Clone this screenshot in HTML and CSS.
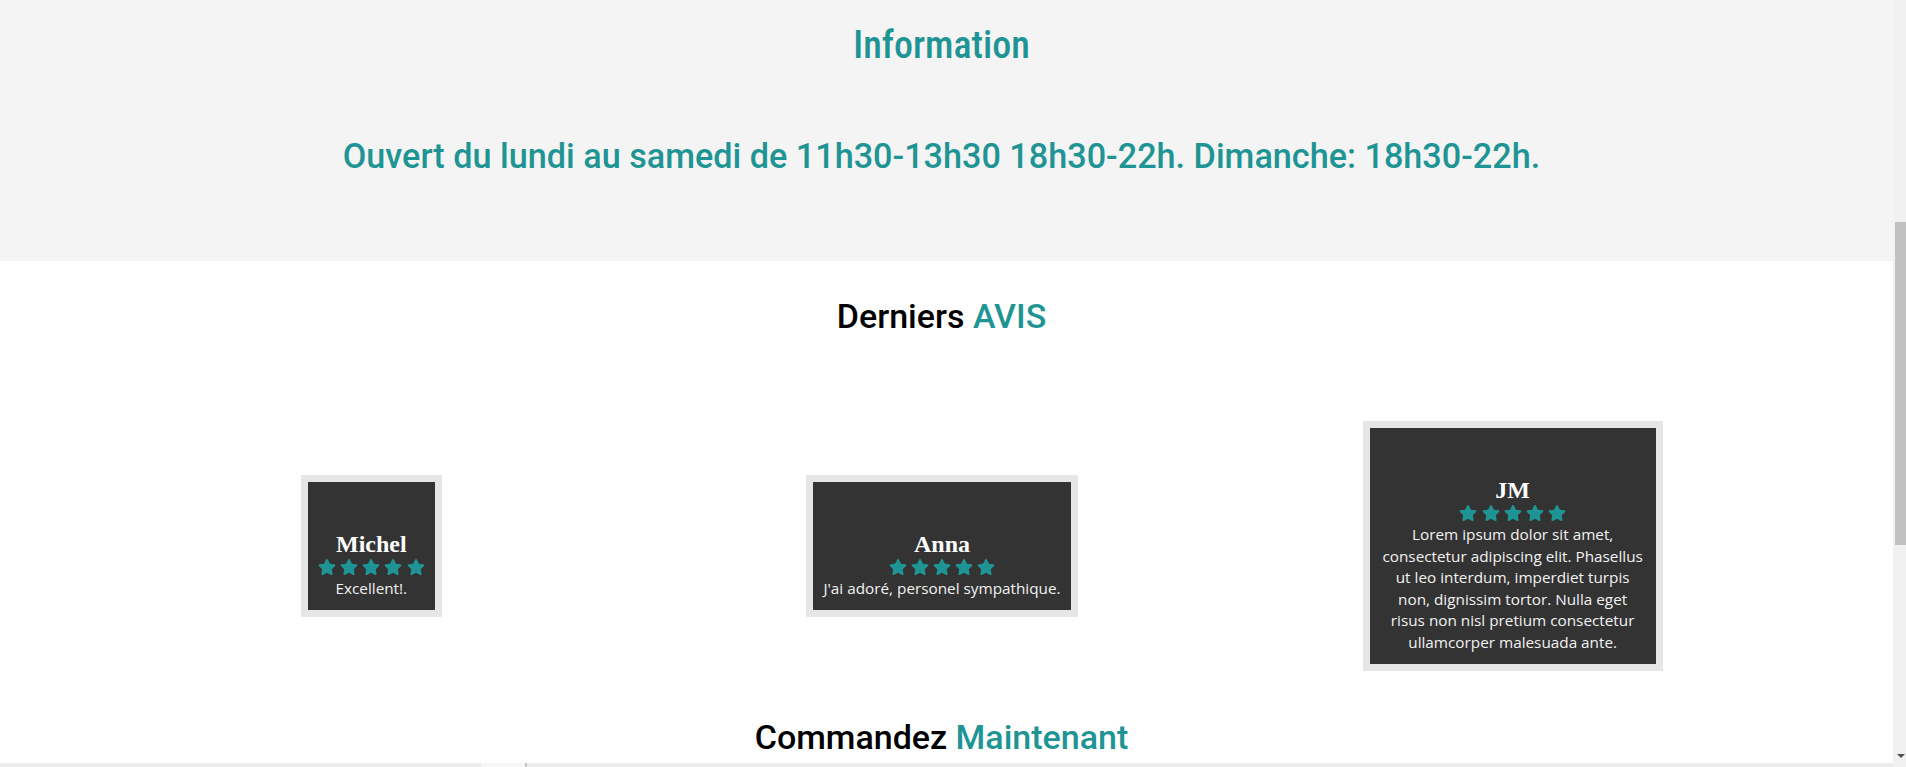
FILE: index.html
```html
<!DOCTYPE html>
<html lang="fr">
<head>
<meta charset="utf-8">
<title>Restaurant</title>
<link rel="stylesheet" href="styles.css">
</head>
<body>
<header class="hero" aria-hidden="true"></header>

<section class="info">
  <h2 class="info-title">Information</h2>
  <p class="info-hours">Ouvert du lundi au samedi de 11h30-13h30 18h30-22h. Dimanche: 18h30-22h.</p>
</section>

<section class="reviews">
  <h2 class="section-title">Derniers <span class="accent">AVIS</span></h2>
  <div class="review-row">
    <div class="review-cell">
      <article class="review-card">
        <h2 class="review-name">Michel</h2>
        <div class="stars"><svg class="star" viewBox="0 0 576 512"><path d="M259.3 17.8L194 150.2 47.9 171.5c-26.2 3.8-36.7 36.1-17.7 54.6l105.7 103-25 145.5c-4.5 26.3 23.2 46 46.4 33.7L288 439.6l130.7 68.7c23.2 12.2 50.9-7.4 46.4-33.7l-25-145.5 105.7-103c19-18.5 8.5-50.8-17.7-54.6L382 150.2 316.7 17.8c-11.7-23.6-45.6-23.9-57.4 0z"/></svg> <svg class="star" viewBox="0 0 576 512"><path d="M259.3 17.8L194 150.2 47.9 171.5c-26.2 3.8-36.7 36.1-17.7 54.6l105.7 103-25 145.5c-4.5 26.3 23.2 46 46.4 33.7L288 439.6l130.7 68.7c23.2 12.2 50.9-7.4 46.4-33.7l-25-145.5 105.7-103c19-18.5 8.5-50.8-17.7-54.6L382 150.2 316.7 17.8c-11.7-23.6-45.6-23.9-57.4 0z"/></svg> <svg class="star" viewBox="0 0 576 512"><path d="M259.3 17.8L194 150.2 47.9 171.5c-26.2 3.8-36.7 36.1-17.7 54.6l105.7 103-25 145.5c-4.5 26.3 23.2 46 46.4 33.7L288 439.6l130.7 68.7c23.2 12.2 50.9-7.4 46.4-33.7l-25-145.5 105.7-103c19-18.5 8.5-50.8-17.7-54.6L382 150.2 316.7 17.8c-11.7-23.6-45.6-23.9-57.4 0z"/></svg> <svg class="star" viewBox="0 0 576 512"><path d="M259.3 17.8L194 150.2 47.9 171.5c-26.2 3.8-36.7 36.1-17.7 54.6l105.7 103-25 145.5c-4.5 26.3 23.2 46 46.4 33.7L288 439.6l130.7 68.7c23.2 12.2 50.9-7.4 46.4-33.7l-25-145.5 105.7-103c19-18.5 8.5-50.8-17.7-54.6L382 150.2 316.7 17.8c-11.7-23.6-45.6-23.9-57.4 0z"/></svg> <svg class="star" viewBox="0 0 576 512"><path d="M259.3 17.8L194 150.2 47.9 171.5c-26.2 3.8-36.7 36.1-17.7 54.6l105.7 103-25 145.5c-4.5 26.3 23.2 46 46.4 33.7L288 439.6l130.7 68.7c23.2 12.2 50.9-7.4 46.4-33.7l-25-145.5 105.7-103c19-18.5 8.5-50.8-17.7-54.6L382 150.2 316.7 17.8c-11.7-23.6-45.6-23.9-57.4 0z"/></svg></div>
        <p class="review-text">Excellent!.</p>
      </article>
    </div>
    <div class="review-cell">
      <article class="review-card">
        <h2 class="review-name">Anna</h2>
        <div class="stars"><svg class="star" viewBox="0 0 576 512"><path d="M259.3 17.8L194 150.2 47.9 171.5c-26.2 3.8-36.7 36.1-17.7 54.6l105.7 103-25 145.5c-4.5 26.3 23.2 46 46.4 33.7L288 439.6l130.7 68.7c23.2 12.2 50.9-7.4 46.4-33.7l-25-145.5 105.7-103c19-18.5 8.5-50.8-17.7-54.6L382 150.2 316.7 17.8c-11.7-23.6-45.6-23.9-57.4 0z"/></svg> <svg class="star" viewBox="0 0 576 512"><path d="M259.3 17.8L194 150.2 47.9 171.5c-26.2 3.8-36.7 36.1-17.7 54.6l105.7 103-25 145.5c-4.5 26.3 23.2 46 46.4 33.7L288 439.6l130.7 68.7c23.2 12.2 50.9-7.4 46.4-33.7l-25-145.5 105.7-103c19-18.5 8.5-50.8-17.7-54.6L382 150.2 316.7 17.8c-11.7-23.6-45.6-23.9-57.4 0z"/></svg> <svg class="star" viewBox="0 0 576 512"><path d="M259.3 17.8L194 150.2 47.9 171.5c-26.2 3.8-36.7 36.1-17.7 54.6l105.7 103-25 145.5c-4.5 26.3 23.2 46 46.4 33.7L288 439.6l130.7 68.7c23.2 12.2 50.9-7.4 46.4-33.7l-25-145.5 105.7-103c19-18.5 8.5-50.8-17.7-54.6L382 150.2 316.7 17.8c-11.7-23.6-45.6-23.9-57.4 0z"/></svg> <svg class="star" viewBox="0 0 576 512"><path d="M259.3 17.8L194 150.2 47.9 171.5c-26.2 3.8-36.7 36.1-17.7 54.6l105.7 103-25 145.5c-4.5 26.3 23.2 46 46.4 33.7L288 439.6l130.7 68.7c23.2 12.2 50.9-7.4 46.4-33.7l-25-145.5 105.7-103c19-18.5 8.5-50.8-17.7-54.6L382 150.2 316.7 17.8c-11.7-23.6-45.6-23.9-57.4 0z"/></svg> <svg class="star" viewBox="0 0 576 512"><path d="M259.3 17.8L194 150.2 47.9 171.5c-26.2 3.8-36.7 36.1-17.7 54.6l105.7 103-25 145.5c-4.5 26.3 23.2 46 46.4 33.7L288 439.6l130.7 68.7c23.2 12.2 50.9-7.4 46.4-33.7l-25-145.5 105.7-103c19-18.5 8.5-50.8-17.7-54.6L382 150.2 316.7 17.8c-11.7-23.6-45.6-23.9-57.4 0z"/></svg></div>
        <p class="review-text">J'ai adoré, personel sympathique.</p>
      </article>
    </div>
    <div class="review-cell">
      <article class="review-card review-card--long">
        <h2 class="review-name">JM</h2>
        <div class="stars"><svg class="star" viewBox="0 0 576 512"><path d="M259.3 17.8L194 150.2 47.9 171.5c-26.2 3.8-36.7 36.1-17.7 54.6l105.7 103-25 145.5c-4.5 26.3 23.2 46 46.4 33.7L288 439.6l130.7 68.7c23.2 12.2 50.9-7.4 46.4-33.7l-25-145.5 105.7-103c19-18.5 8.5-50.8-17.7-54.6L382 150.2 316.7 17.8c-11.7-23.6-45.6-23.9-57.4 0z"/></svg> <svg class="star" viewBox="0 0 576 512"><path d="M259.3 17.8L194 150.2 47.9 171.5c-26.2 3.8-36.7 36.1-17.7 54.6l105.7 103-25 145.5c-4.5 26.3 23.2 46 46.4 33.7L288 439.6l130.7 68.7c23.2 12.2 50.9-7.4 46.4-33.7l-25-145.5 105.7-103c19-18.5 8.5-50.8-17.7-54.6L382 150.2 316.7 17.8c-11.7-23.6-45.6-23.9-57.4 0z"/></svg> <svg class="star" viewBox="0 0 576 512"><path d="M259.3 17.8L194 150.2 47.9 171.5c-26.2 3.8-36.7 36.1-17.7 54.6l105.7 103-25 145.5c-4.5 26.3 23.2 46 46.4 33.7L288 439.6l130.7 68.7c23.2 12.2 50.9-7.4 46.4-33.7l-25-145.5 105.7-103c19-18.5 8.5-50.8-17.7-54.6L382 150.2 316.7 17.8c-11.7-23.6-45.6-23.9-57.4 0z"/></svg> <svg class="star" viewBox="0 0 576 512"><path d="M259.3 17.8L194 150.2 47.9 171.5c-26.2 3.8-36.7 36.1-17.7 54.6l105.7 103-25 145.5c-4.5 26.3 23.2 46 46.4 33.7L288 439.6l130.7 68.7c23.2 12.2 50.9-7.4 46.4-33.7l-25-145.5 105.7-103c19-18.5 8.5-50.8-17.7-54.6L382 150.2 316.7 17.8c-11.7-23.6-45.6-23.9-57.4 0z"/></svg> <svg class="star" viewBox="0 0 576 512"><path d="M259.3 17.8L194 150.2 47.9 171.5c-26.2 3.8-36.7 36.1-17.7 54.6l105.7 103-25 145.5c-4.5 26.3 23.2 46 46.4 33.7L288 439.6l130.7 68.7c23.2 12.2 50.9-7.4 46.4-33.7l-25-145.5 105.7-103c19-18.5 8.5-50.8-17.7-54.6L382 150.2 316.7 17.8c-11.7-23.6-45.6-23.9-57.4 0z"/></svg></div>
        <p class="review-text">Lorem ipsum dolor sit amet, consectetur adipiscing elit. Phasellus ut leo interdum, imperdiet turpis non, dignissim tortor. Nulla eget risus non nisl pretium consectetur ullamcorper malesuada ante.</p>
      </article>
    </div>
  </div>
</section>

<section class="order">
  <h2 class="section-title">Commandez <span class="accent">Maintenant</span></h2>
  <div class="order-panel">
    <div class="order-tab"></div>
  </div>
</section>

<div class="scrollbar" aria-hidden="true">
  <div class="scrollbar-thumb"></div>
  <div class="scrollbar-arrow"></div>
</div>

<script src="script.js"></script>
</body>
</html>
```

FILE: styles.css
```css
html, body {
  margin: 0;
  padding: 0;
}

body {
  font-family: "Open Sans", "Liberation Sans", sans-serif;
  background: #ffffff;
  color: #000;
  margin-right: 13px;
}

.hero {
  height: 486px;
  background: #2d2d2d;
}

/* Information band */
.info {
  background: #f4f4f4;
  padding: 23px 10px 85px 0;
  text-align: center;
}

.info-title {
  margin: 0;
  font-family: "Roboto Condensed", Roboto, sans-serif;
  font-weight: 500;
  font-size: 38px;
  line-height: 44px;
  color: #1f9494;
}

.info-hours {
  margin: 69px 0 0;
  font-family: Roboto, sans-serif;
  font-weight: 500;
  font-size: 34.2px;
  line-height: 40px;
  color: #1f9494;
}

/* Reviews */
.reviews {
  padding-top: 35px;
  text-align: center;
}

.section-title {
  margin: 0;
  padding-right: 10px;
  font-family: Roboto, sans-serif;
  font-weight: 500;
  font-size: 34px;
  line-height: 40px;
  color: #000;
}

.accent {
  color: #1f9494;
}

.review-row {
  margin-top: 85px;
  padding: 0 95px 0 86px;
  display: grid;
  grid-template-columns: repeat(3, 1fr);
  align-items: center;
  justify-items: center;
}

.review-cell {
  display: flex;
  justify-content: center;
}

.review-card {
  box-sizing: border-box;
  max-width: 300px;
  background: #333333;
  border: 7px solid #e6e6e6;
  padding: 49px 10px 10px;
  text-align: center;
}

.review-name {
  margin: 0;
  font-family: "Liberation Serif", "Times New Roman", serif;
  font-weight: 700;
  font-size: 24px;
  line-height: normal;
  color: #ffffff;
}

.stars {
  font-size: 16px;
  line-height: 20px;
  height: 20px;
  white-space: nowrap;
}

.star {
  width: 18px;
  height: 16px;
  fill: #1f9494;
  vertical-align: -1px;
}

.review-text {
  margin: 0;
  font-size: 15.3px;
  line-height: 21.6px;
  color: #f2f2f2;
}

/* Order */
.order {
  padding-top: 46px;
  text-align: center;
}

.order-panel {
  margin-top: 6px;
  height: 490px;
  background: #ececec;
  position: relative;
}

.order-tab {
  position: absolute;
  left: 481px;
  top: 0;
  width: 44px;
  height: 40px;
  background: #f6f6f6;
  border-right: 2px solid #c8c8c8;
}

/* Browser-style scrollbar drawn over the right edge */
.scrollbar {
  position: fixed;
  top: 0;
  right: 0;
  width: 13px;
  height: 100vh;
  background: #f1f1f1;
}

.scrollbar-thumb {
  position: absolute;
  top: 222px;
  left: 2px;
  right: 0;
  height: 323px;
  background: #c1c1c1;
}

.scrollbar-arrow {
  position: absolute;
  bottom: 9px;
  left: 4px;
  width: 0;
  height: 0;
  border-left: 4px solid transparent;
  border-right: 4px solid transparent;
  border-top: 4px solid #505050;
}
```

FILE: script.js
```js
window.scrollTo(0, 486);
window.addEventListener('load', function () {
  window.scrollTo(0, 486);
});
```
